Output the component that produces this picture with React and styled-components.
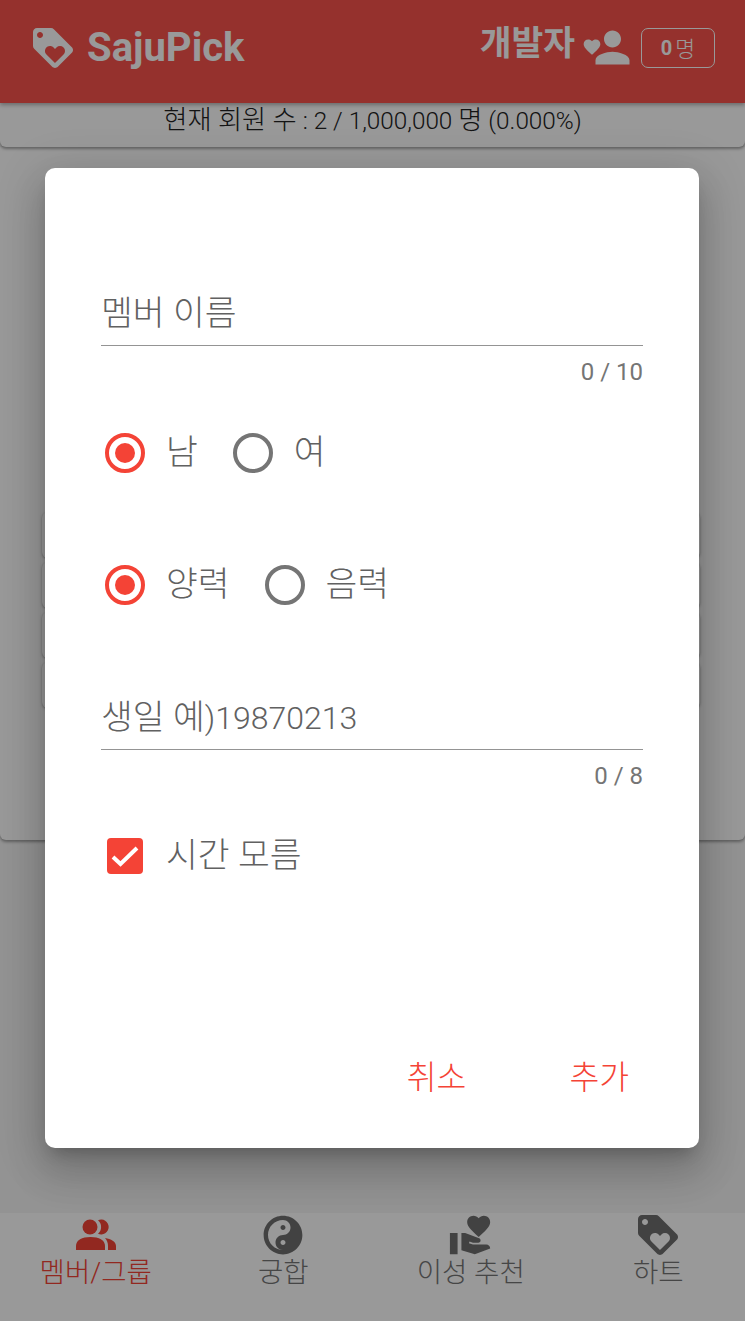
import React from 'react';
import styled, { createGlobalStyle } from 'styled-components';
import { MdLoyalty, MdPerson, MdVolunteerActivism, MdFavorite } from 'react-icons/md';
import { FaYinYang } from 'react-icons/fa';

const Global = createGlobalStyle`
  html,body{
    margin:0;
    padding:0;
    background:#fff;
  }
  body{
    font-family:Roboto,"Noto Sans CJK KR",sans-serif;
  }
`
// 한글 is drawn a little larger than the latin text next to it
const Ko = styled.span`
  font-size:1.08em;
  font-weight:${p => p.$bold ? 700 : 300};
  color:${p => p.$color || 'inherit'};
`
const Page = styled.div`
  width:745px;
  height:1321px;
  overflow:hidden;
  position:relative;
  display:flex;
  flex-direction:column;
  background:#f5f5f5;
`
const Header = styled.header`
  height:103px;
  flex:none;
  background:#f9534b;
  color:#fff;
  display:flex;
  align-items:center;
  justify-content:space-between;
  padding:0 30px 10px 29px;
  box-sizing:border-box;
  box-shadow:0 2px 4px rgba(0,0,0,.3);
  position:relative;
  z-index:2;
`
const Brand = styled.div`
  display:flex;
  align-items:center;
  gap:10px;
  font-size:40px;
  font-weight:700;
  line-height:48px;
  margin-top:2px;
`
const UserBox = styled.div`
  display:flex;
  align-items:center;
`
const UserName = styled.span`
  font-size:32px;
  font-weight:700;
  margin-right:7px;
  line-height:38px;
  margin-top:-6px;
`
const HeartIcon = styled(MdFavorite)`
  flex:none;
  margin-top:1px;
`
const PersonIcon = styled(MdPerson)`
  flex:none;
  margin:2px 3px 0 -15px;
`
const CountBadge = styled.span`
  width:74px;
  height:40px;
  box-sizing:border-box;
  border:1px solid #fff;
  border-radius:7px;
  display:flex;
  align-items:center;
  justify-content:center;
  gap:3px;
  font-size:20px;
  margin-top:2px;
  b{ font-weight:700; }
`
const Notice = styled.div`
  height:44px;
  flex:none;
  background:#fff;
  border-radius:0 0 6px 6px;
  box-shadow:0 2px 3px rgba(0,0,0,.35);
  text-align:center;
  font-size:24.3px;
  font-weight:300;
  line-height:34px;
  color:#222;
  position:relative;
  z-index:1;
`
const Content = styled.div`
  height:693px;
  flex:none;
  box-sizing:border-box;
  padding-top:365px;
  background:#fff;
  border-radius:0 0 6px 6px;
  box-shadow:0 2px 3px rgba(0,0,0,.35);
`
const RowList = styled.div`
  display:flex;
  flex-direction:column;
  gap:4px;
  margin:0 45px 0 42px;
`
const Row = styled.div`
  height:46px;
  background:#fff;
  border-radius:6px;
  box-shadow:0 1px 3px rgba(0,0,0,.35);
`
const Nav = styled.nav`
  position:absolute;
  left:0;
  right:0;
  bottom:0;
  height:108px;
  background:#fff;
  display:grid;
  grid-template-columns:repeat(4,187.5px);
  padding-left:2px;
  overflow:hidden;
`
const NavItem = styled.div`
  display:flex;
  flex-direction:column;
  align-items:center;
  color:${p => p.$active ? '#f44336' : '#757575'};
  font-size:25.5px;
  line-height:34px;
  svg{ display:block; }
`
const NavIcon = styled.div`
  height:43px;
  display:flex;
  align-items:center;
  justify-content:center;
  color:${p => p.$active ? '#f44336' : '#6f6f6f'};
`
const Overlay = styled.div`
  position:absolute;
  inset:0;
  background:rgba(0,0,0,.4);
  z-index:5;
  display:flex;
  justify-content:center;
  align-items:flex-start;
  padding:168px 1px 0 0;
  box-sizing:border-box;
`
const Dialog = styled.div`
  width:654px;
  height:980px;
  background:#fff;
  border-radius:10px;
  box-shadow:0 11px 15px -7px rgba(0,0,0,.2),0 24px 38px 3px rgba(0,0,0,.14),0 9px 46px 8px rgba(0,0,0,.12);
  box-sizing:border-box;
  padding:116px 56px 0;
  display:flex;
  flex-direction:column;
`
const FieldText = styled.div`
  height:62px;
  box-sizing:border-box;
  border:0 solid #949494;
  border-bottom-width:1px;
  font-size:32px;
  font-weight:300;
  line-height:58px;
  color:#616161;
  margin-top:${p => p.$top || 0}px;
`
const FieldCount = styled.div`
  text-align:right;
  font-size:24px;
  line-height:28px;
  margin-top:12px;
  color:#757575;
`
const RadioRow = styled.div`
  display:flex;
  align-items:center;
  height:44px;
  padding-left:4px;
  margin-top:${p => p.$top}px;
`
const RadioRing = styled.span`
  width:40px;
  height:40px;
  flex:none;
  box-sizing:border-box;
  border-radius:50%;
  border:4px solid ${p => p.$on ? '#f44336' : '#757575'};
  display:flex;
  align-items:center;
  justify-content:center;
  &::after{
    content:'';
    width:20px;
    height:20px;
    border-radius:50%;
    background:${p => p.$on ? '#f44336' : 'transparent'};
  }
`
const OptionLabel = styled.span`
  font-size:32px;
  color:#616161;
  margin:-2px 35px 0 21px;
  line-height:44px;
`
const CheckRow = styled.div`
  display:flex;
  align-items:center;
  padding-left:6px;
  margin-top:44px;
  height:44px;
`
const CheckBox = styled.span`
  width:36px;
  height:36px;
  flex:none;
  border-radius:4px;
  background:#f44336;
  display:flex;
  align-items:center;
  justify-content:center;
  margin-right:2px;
`
const Actions = styled.div`
  margin-top:auto;
  display:flex;
  justify-content:flex-end;
  gap:103px;
  padding:0 14px 49px 0;
`
const TextButton = styled.span`
  font-size:30px;
  line-height:40px;
  color:#f44336;
`

function GroupIcon() {
  return (
    <svg width="40" height="31" viewBox="0 0 40 31" fill="currentColor">
      <circle cx="14" cy="8" r="7.5" />
      <path d="M0 31v-4c0-6 6-9 14.5-9s14.5 3 14.5 9v4z" />
      <path d="M22 1.2A7.5 7.5 0 1 1 22 14.8A9 9 0 0 0 22 1.2z" />
      <path d="M29 19c6 1 11 3.5 11 8v4h-8v-4c0-3-1-6-3-8z" />
    </svg>
  )
}

const rows = [0, 1, 2, 3]
const tabs = [
  { label: '멤버/그룹', icon: <GroupIcon />, active: true },
  { label: '궁합', icon: <FaYinYang size={40} /> },
  { label: '이성 추천', icon: <MdVolunteerActivism size={46} /> },
  { label: '하트', icon: <MdLoyalty size={48} /> },
]

function Radio({ on, label }) {
  return (
    <>
      <RadioRing $on={on} />
      <OptionLabel><Ko>{label}</Ko></OptionLabel>
    </>
  )
}

export default function App() {
  return (
    <Page>
      <Global />
      <Header>
        <Brand>
          <MdLoyalty size={48} />
          SajuPick
        </Brand>
        <UserBox>
          <UserName><Ko $bold>개발자</Ko></UserName>
          <HeartIcon size={20} />
          <PersonIcon size={51} />
          <CountBadge><b>0</b><Ko>명</Ko></CountBadge>
        </UserBox>
      </Header>
      <Notice><Ko>현재 회원 수</Ko> : 2 / 1,000,000 <Ko>명</Ko> (0.000%)</Notice>
      <Content>
        <RowList>
          {rows.map(i => <Row key={i} />)}
        </RowList>
      </Content>
      <Nav>
        {tabs.map(t => (
          <NavItem key={t.label} $active={t.active}>
            <NavIcon $active={t.active}>{t.icon}</NavIcon>
            <Ko>{t.label}</Ko>
          </NavItem>
        ))}
      </Nav>
      <Overlay>
        <Dialog>
          <FieldText><Ko>멤버 이름</Ko></FieldText>
          <FieldCount>0 / 10</FieldCount>
          <RadioRow $top={45}>
            <Radio on label="남" />
            <Radio label="여" />
          </RadioRow>
          <RadioRow $top={88}>
            <Radio on label="양력" />
            <Radio label="음력" />
          </RadioRow>
          <FieldText $top={81}><Ko>생일 예</Ko>)19870213</FieldText>
          <FieldCount>0 / 8</FieldCount>
          <CheckRow>
            <CheckBox>
              <svg width="28" height="24" viewBox="0 0 28 24">
                <path d="M2 13l7.5 7L26 4" fill="none" stroke="#fff" strokeWidth="4" />
              </svg>
            </CheckBox>
            <OptionLabel><Ko>시간 모름</Ko></OptionLabel>
          </CheckRow>
          <Actions>
            <TextButton><Ko>취소</Ko></TextButton>
            <TextButton><Ko>추가</Ko></TextButton>
          </Actions>
        </Dialog>
      </Overlay>
    </Page>
  )
}
